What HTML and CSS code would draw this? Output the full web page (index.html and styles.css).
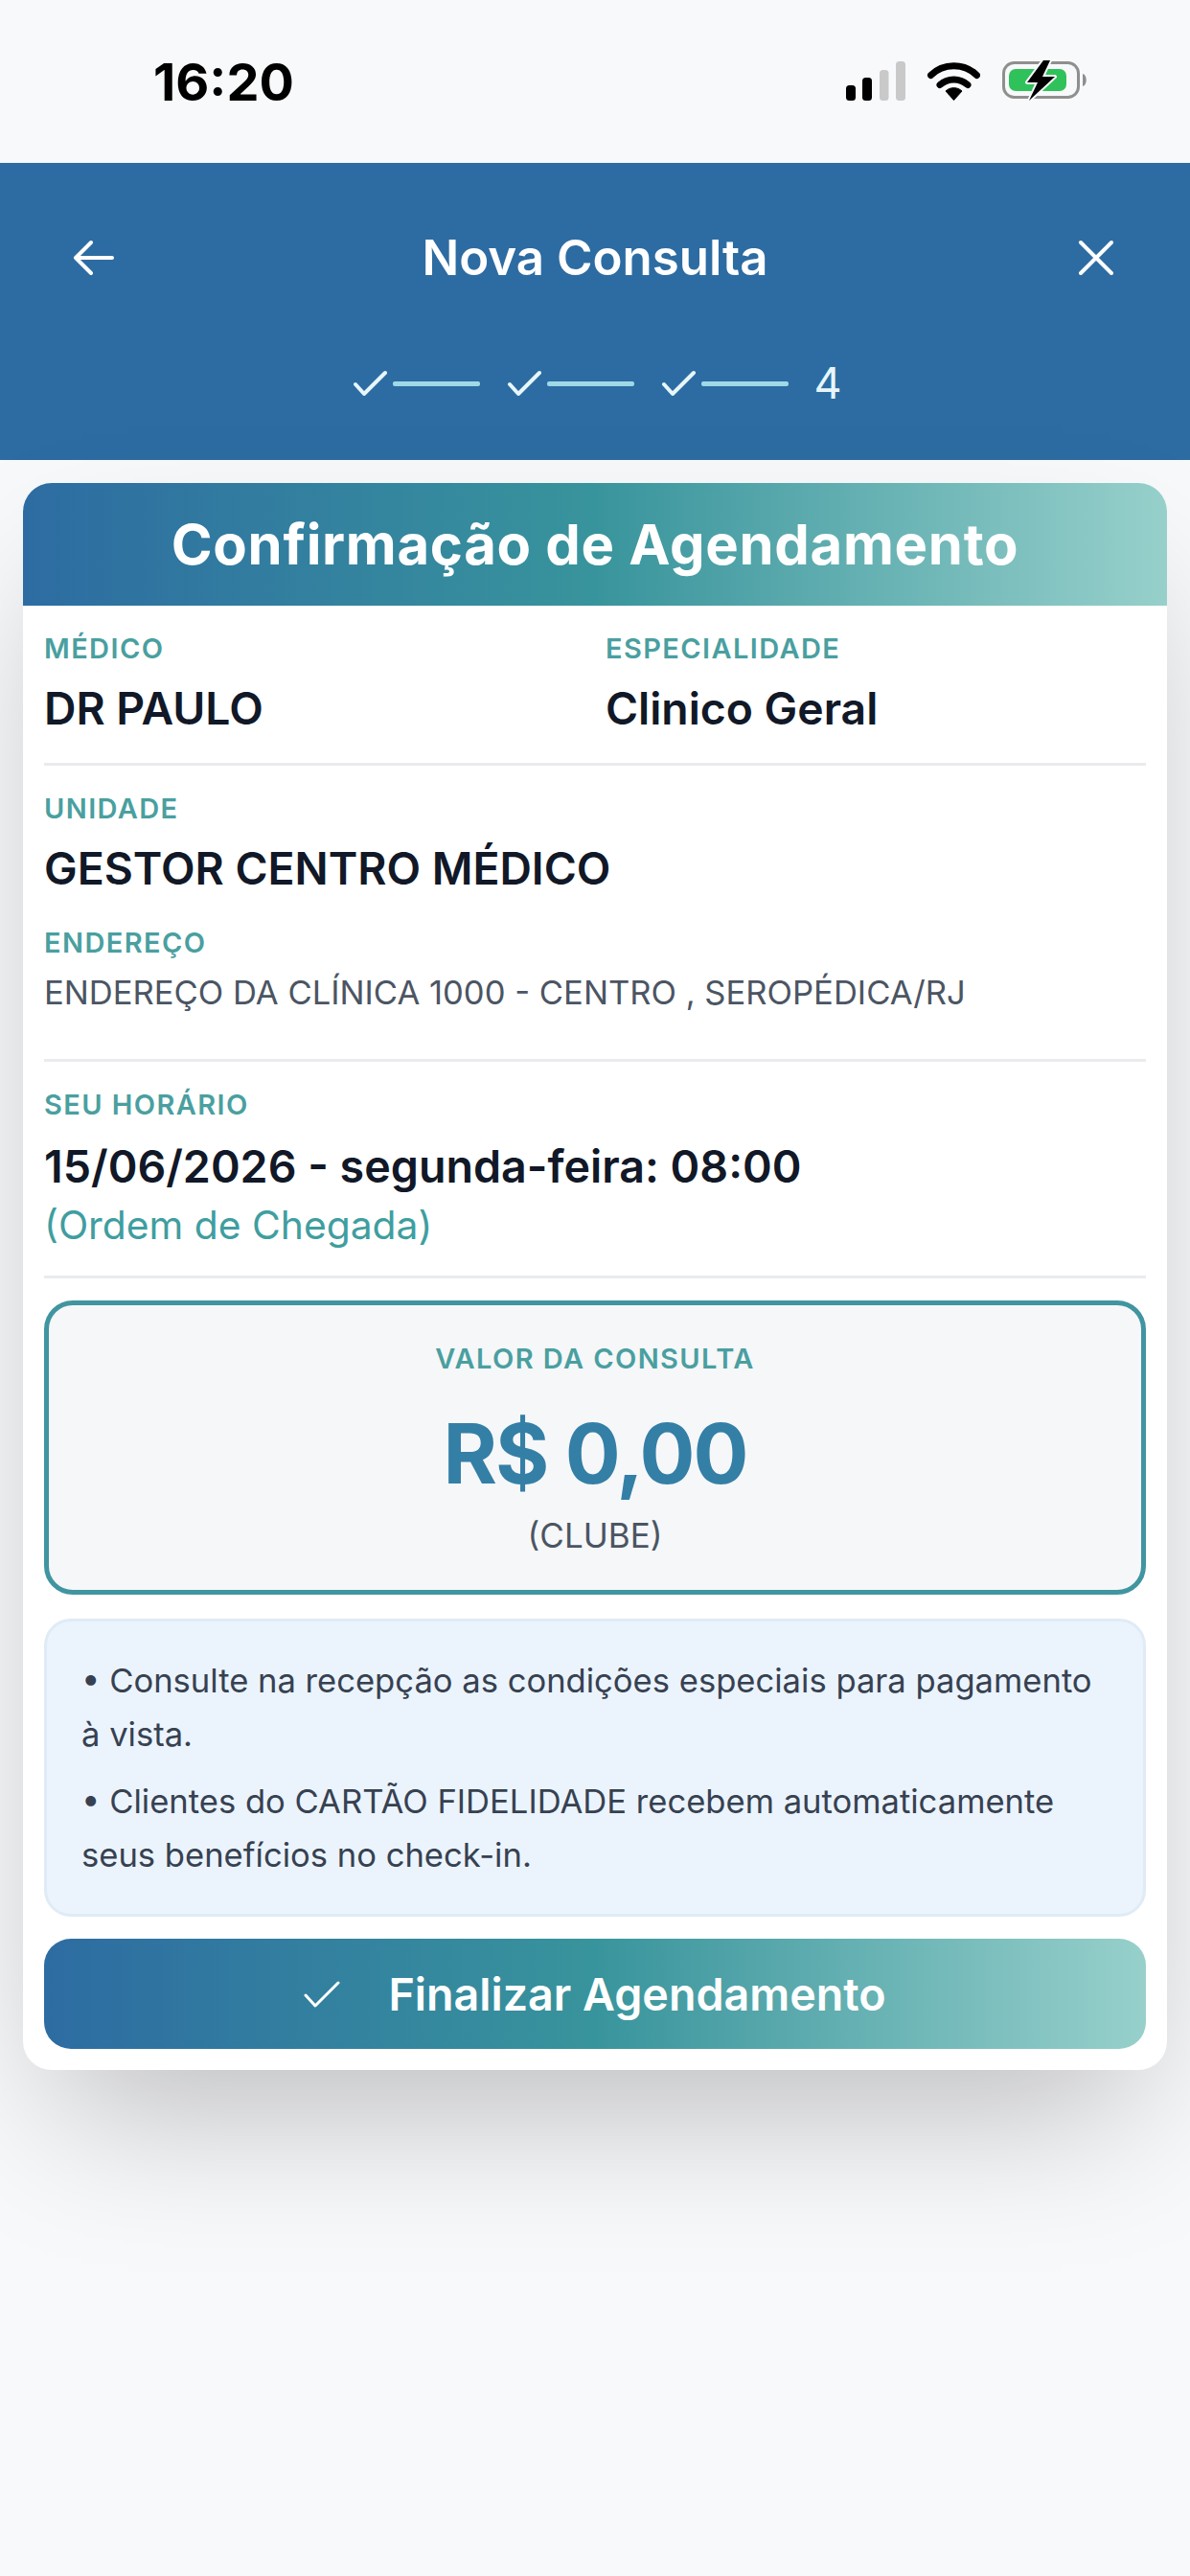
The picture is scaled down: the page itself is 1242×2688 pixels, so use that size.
FILE: index.html
```html
<!DOCTYPE html>
<html lang="pt-BR">
<head>
<meta charset="utf-8">
<title>Nova Consulta</title>
<link rel="stylesheet" href="styles.css">
</head>
<body>
<div class="status">
  <span class="time">16:20</span>
  <div class="status-icons">
    <svg width="62" height="41" viewBox="0 0 62 41"><rect x="0" y="25" width="10" height="16" rx="3.5" fill="#000"/><rect x="17" y="17" width="10" height="24" rx="3.5" fill="#000"/><rect x="35" y="9" width="9.5" height="32" rx="3.5" fill="#c9c9c9"/><rect x="52" y="0" width="10" height="41" rx="3.5" fill="#c9c9c9"/></svg>
    <svg width="55" height="41" viewBox="0 0 55 41"><path d="M3.5 14.5C16.5 1.5 38.5 1.5 51.5 14.5" fill="none" stroke="#000" stroke-width="7" stroke-linecap="round"/><path d="M13 24.5C21 17 34 17 42 24.5" fill="none" stroke="#000" stroke-width="7" stroke-linecap="round"/><path d="M19 31C24 26.5 31 26.5 36 31L27.5 40.5Z" fill="#000" stroke="#000" stroke-width="1" stroke-linejoin="round"/></svg>
    <svg width="90" height="44" viewBox="0 0 90 44"><rect x="1.5" y="3.5" width="78" height="36" rx="11" fill="none" stroke="#8f8f8f" stroke-width="3"/><rect x="7" y="10" width="60" height="23" rx="7" fill="#2fc25b"/><path d="M84 15c5 1 5 12 0 13z" fill="#8f8f8f"/><path d="M43 1L26 24H37L28 43L55 18H42L50 1Z" fill="#000" stroke="#f8fafc" stroke-width="4" stroke-linejoin="round" paint-order="stroke"/></svg>
  </div>
</div>

<header class="top">
  <div class="nav">
    <svg width="44" height="38" viewBox="0 0 44 38"><path d="M41 19H3M19 3L3 19L19 35" fill="none" stroke="#fff" stroke-width="4" stroke-linecap="round" stroke-linejoin="round"/></svg>
    <h1 class="nav-title">Nova Consulta</h1>
    <svg width="44" height="38" viewBox="0 0 44 38"><path d="M6 3L38 35M38 3L6 35" fill="none" stroke="#fff" stroke-width="4" stroke-linecap="round"/></svg>
  </div>
  <div class="steps">
    <svg width="35" height="28" viewBox="0 0 35 28"><path d="M2 15L11 25L33 3" fill="none" stroke="#e6f6fa" stroke-width="4" stroke-linecap="round" stroke-linejoin="round"/></svg>
    <span class="step-line"></span>
    <svg width="35" height="28" viewBox="0 0 35 28"><path d="M2 15L11 25L33 3" fill="none" stroke="#e6f6fa" stroke-width="4" stroke-linecap="round" stroke-linejoin="round"/></svg>
    <span class="step-line"></span>
    <svg width="35" height="28" viewBox="0 0 35 28"><path d="M2 15L11 25L33 3" fill="none" stroke="#e6f6fa" stroke-width="4" stroke-linecap="round" stroke-linejoin="round"/></svg>
    <span class="step-line"></span>
    <span class="step-num">4</span>
  </div>
</header>

<main class="card">
  <h2 class="card-head">Confirmação de Agendamento</h2>
  <div class="card-body">
    <section class="row two">
      <div>
        <div class="label">MÉDICO</div>
        <div class="value">DR PAULO</div>
      </div>
      <div>
        <div class="label">ESPECIALIDADE</div>
        <div class="value">Clinico Geral</div>
      </div>
    </section>
    <section class="row row-addr">
      <div class="label">UNIDADE</div>
      <div class="value">GESTOR CENTRO MÉDICO</div>
      <div class="label addr-label">ENDEREÇO</div>
      <div class="addr">ENDEREÇO DA CLÍNICA 1000 - CENTRO , SEROPÉDICA/RJ</div>
    </section>
    <section class="row row-last">
      <div class="label">SEU HORÁRIO</div>
      <div class="date">15/06/2026 - segunda-feira: 08:00</div>
      <div class="arrival">(Ordem de Chegada)</div>
    </section>
    <section class="price">
      <div class="label">VALOR DA CONSULTA</div>
      <div class="amount">R$ 0,00</div>
      <div class="plan">(CLUBE)</div>
    </section>
    <section class="notes">
      <p>• Consulte na recepção as condições especiais para pagamento à vista.</p>
      <p>• Clientes do CARTÃO FIDELIDADE recebem automaticamente seus benefícios no check-in.</p>
    </section>
    <button class="finish" type="button">
      <svg width="38" height="30" viewBox="0 0 38 30"><path d="M2 16L12 27L36 3" fill="none" stroke="#fff" stroke-width="3" stroke-linecap="round" stroke-linejoin="round"/></svg>
      <span>Finalizar Agendamento</span>
    </button>
  </div>
</main>
</body>
</html>
```
FILE: styles.css
```css
* { box-sizing: border-box; }
html, body { margin: 0; padding: 0; }
body {
  width: 1242px;
  height: 2688px;
  overflow: hidden;
  background: #f8f9fb;
  font-family: Inter, "Liberation Sans", sans-serif;
  color: #111827;
}
.status {
  height: 170px;
  display: flex;
  align-items: flex-start;
  justify-content: space-between;
  padding: 58px 106px 0 160px;
}
.time { font-size: 54px; line-height: 56px; font-weight: 700; color: #000; }
.status-icons { display: flex; align-items: center; gap: 23px; padding-top: 4px; }
.top {
  height: 310px;
  background: #2d6ca2;
  padding-top: 71px;
}
.nav {
  display: flex;
  align-items: center;
  justify-content: space-between;
  height: 56px;
  padding: 0 76px;
}
.nav-title { margin: 0; font-size: 51px; line-height: 56px; font-weight: 600; color: #fff; }
.steps {
  margin-top: 79px;
  display: flex;
  align-items: center;
  justify-content: center;
  padding-left: 6px;
}
.step-line { width: 91px; height: 5px; border-radius: 2px; background: #9fd9e8; margin: 0 29px 0 6px; }
.step-num { font-size: 45px; line-height: 48px; color: #e6f6fa; margin-left: -3px; }
.card {
  margin: 24px 24px 0;
  height: 1656px;
  background: #fff;
  border-radius: 30px;
  overflow: hidden;
  box-shadow: 0 75px 150px -36px rgba(0,0,0,.25);
}
.card-head {
  margin: 0;
  height: 128px;
  display: flex;
  align-items: center;
  justify-content: center;
  font-size: 58px;
  font-weight: 700;
  letter-spacing: .7px;
  color: #fff;
  background: linear-gradient(90deg, #2d6ca2 0%, #38949c 50%, #97d0cb 100%);
}
.card-body { padding: 28px 22px 22px; }
.row { border-bottom: 3px solid #e9ebee; padding-bottom: 30px; margin-bottom: 28px; }
.row-addr { padding-bottom: 50px; }
.row-last { margin-bottom: 23px; }
.two { display: grid; grid-template-columns: 586px 1fr; }
.label { font-size: 29px; line-height: 34px; font-weight: 600; letter-spacing: 1.4px; color: #4a9fa0; }
.value { margin-top: 18px; font-size: 46.3px; line-height: 54px; font-weight: 600; color: #111827; }
.addr-label { margin-top: 34px; }
.addr { margin-top: 14px; font-size: 34.6px; line-height: 40px; color: #4b5563; }
.date { margin-top: 19px; font-size: 46.6px; line-height: 56px; font-weight: 600; color: #111827; }
.arrival { margin-top: 10px; font-size: 40.8px; line-height: 46px; color: #3f9ea0; }
.price {
  height: 307px;
  border: 5px solid #4095a0;
  border-radius: 30px;
  background: #f6f7f9;
  text-align: center;
  padding-top: 39px;
}
.amount { margin-top: 32px; font-size: 86px; line-height: 100px; font-weight: 700; letter-spacing: -2px; color: #347fa6; }
.plan { margin-top: 15px; font-size: 35px; line-height: 40px; color: #4b5563; }
.notes {
  margin-top: 25px;
  height: 311px;
  border: 3px solid #dfebf5;
  border-radius: 28px;
  background: #ebf4fd;
  padding: 33px 36px 0;
  color: #374151;
  font-size: 34.6px;
  line-height: 56px;
}
.notes p { margin: 0 0 14px; }
.finish {
  margin-top: 23px;
  width: 100%;
  height: 115px;
  border: 0;
  border-radius: 28px;
  display: flex;
  align-items: center;
  justify-content: center;
  gap: 50px;
  padding: 0;
  font-family: inherit;
  font-size: 46.6px;
  font-weight: 600;
  color: #fff;
  background: linear-gradient(90deg, #2d6ca2 0%, #38949c 50%, #97d0cb 100%);
}
```
